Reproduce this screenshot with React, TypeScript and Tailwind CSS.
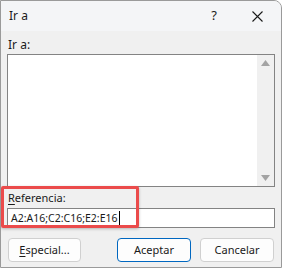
import React from "react";

export default function App() {
  const font = { fontFamily: '"Noto Sans", "Open Sans", sans-serif' };
  return (
    <div className="w-[283px] h-[269px] bg-white relative overflow-hidden" style={font}>
      <div className="w-[282px] h-[268px] border border-[#9a9a9a] rounded-tr-[8px] overflow-hidden flex flex-col bg-[#f0f0f0]">
        <div className="h-[30px] bg-[#f4f5f7] flex items-center pl-[8px] text-[12px] text-[#1a1a1a] shrink-0">
          <span>Ir a</span>
          <span className="ml-auto w-[14px] text-center text-[13px] mr-[31px]">?</span>
          <svg width="11" height="11" viewBox="0 0 11 11" className="mr-[18px]">
            <path d="M0.5 0.5L10.5 10.5M10.5 0.5L0.5 10.5" stroke="#1a1a1a" strokeWidth="1.1" />
          </svg>
        </div>
        <div className="relative flex-1 px-[6px] text-[11px] text-[#1a1a1a]">
          <div className="mt-[6px] h-[16px] leading-[16px] pl-[1px] text-[12px]">Ir a:</div>
          <div className="mt-[1px] h-[133px] border border-[#838383] bg-white flex">
            <div className="flex-1" />
            <div className="w-[17px] bg-[#f0f0f0] flex flex-col items-center justify-between py-[5px]">
              <svg width="9" height="6" viewBox="0 0 9 6"><path d="M4.5 0L9 6H0Z" fill="#a3a3a3" /></svg>
              <svg width="9" height="6" viewBox="0 0 9 6"><path d="M0 0H9L4.5 6Z" fill="#a3a3a3" /></svg>
            </div>
          </div>
          <div className="mt-[3px] h-[16px] leading-[16px] pl-[1px]">
            <span className="underline underline-offset-2">R</span>eferencia:
          </div>
          <div className="mt-[2px] h-[20px] border border-[#838383] bg-white flex items-center pl-[3px] leading-[16px] text-[10.5px]">
            <span>A2:A16;C2:C16;E2:E16</span>
            <span className="w-[1px] h-[14px] bg-black ml-[1px]" />
          </div>
          <div className="mt-[10px] flex h-[24px]">
            <div className="ml-[1px] w-[73px] h-[24px] rounded-[4px] border border-[#d0d0d0] bg-[#fdfdfd] flex items-center justify-center">
              <span><span className="underline underline-offset-2">E</span>special...</span>
            </div>
            <div className="ml-[36px] w-[74px] h-[24px] rounded-[4px] border border-[#0067c0] bg-[#fdfdfd] flex items-center justify-center">
              Aceptar
            </div>
            <div className="ml-[9px] w-[74px] h-[24px] rounded-[4px] border border-[#d0d0d0] bg-[#fdfdfd] flex items-center justify-center">
              Cancelar
            </div>
          </div>
          <div className="absolute left-[0px] top-[155px] w-[138px] h-[42px] border-[3px] border-[#eb4b4b] rounded-[2px] shadow-[0_1px_3px_rgba(0,0,0,0.25)]" />
        </div>
      </div>
    </div>
  );
}
